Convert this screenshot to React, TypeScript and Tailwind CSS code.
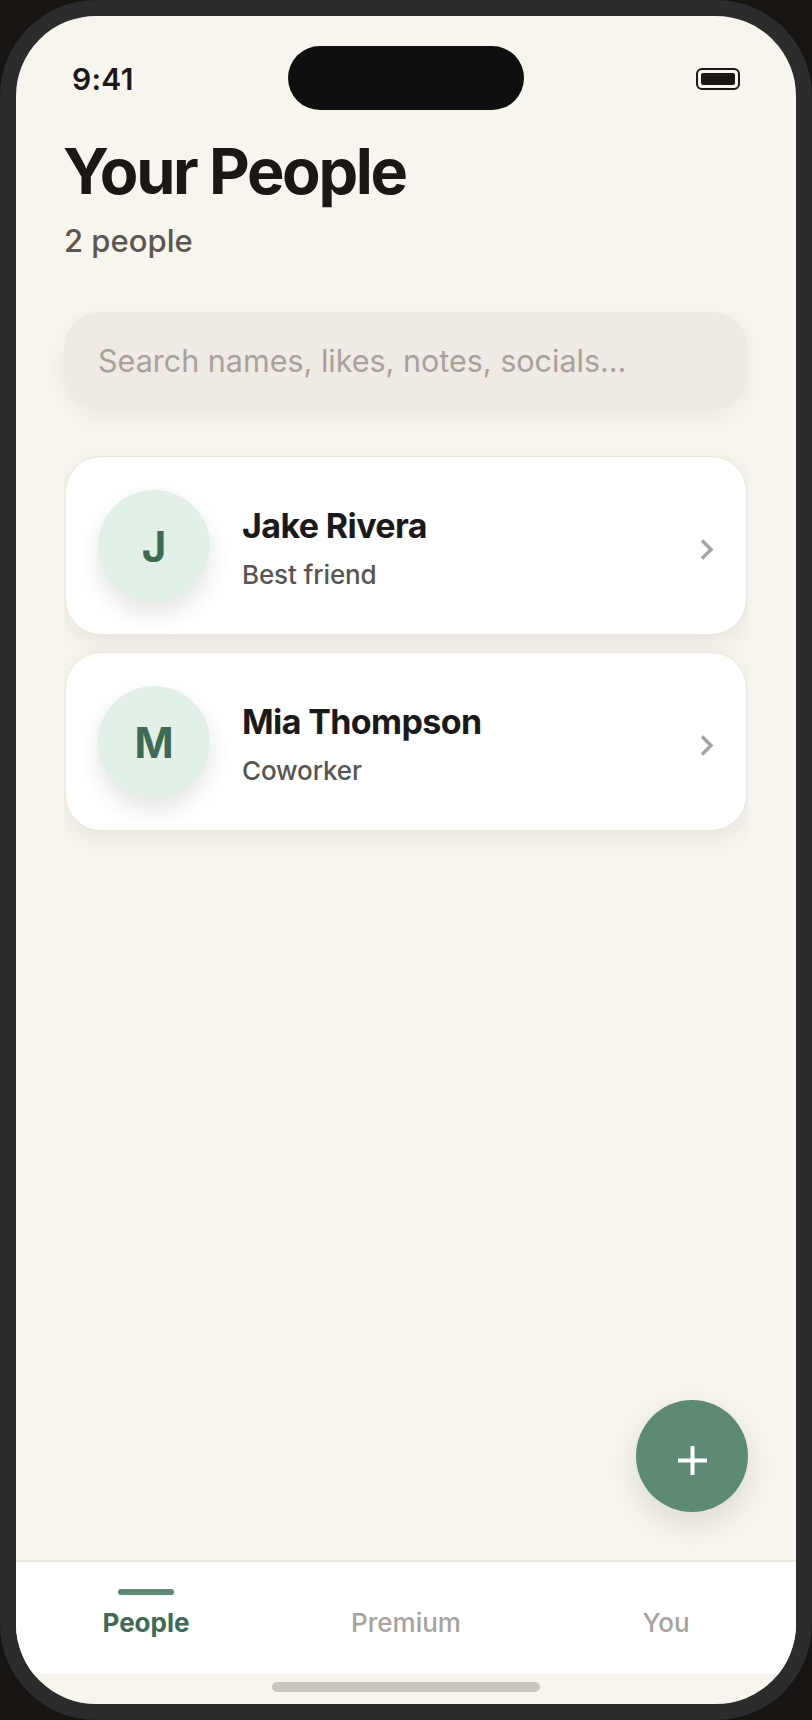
const people = [
  { initial: 'J', name: 'Jake Rivera', relation: 'Best friend' },
  { initial: 'M', name: 'Mia Thompson', relation: 'Coworker' },
];

const tabs = ['People', 'Premium', 'You'];

function PersonCard({ initial, name, relation }: { initial: string; name: string; relation: string }) {
  return (
    <div className="flex h-[179px] items-center rounded-[36px] border border-[#ece8e0] bg-white pt-[1px] pr-[32px] pl-[32px] shadow-[0_8px_24px_rgba(60,50,30,0.08)]">
      <div className="flex h-[112px] w-[112px] shrink-0 items-center justify-center rounded-full bg-[#e3f0e8] text-[42px] font-bold text-[#3d6b55] shadow-[0_12px_24px_rgba(60,50,30,0.12)]">
        {initial}
      </div>
      <div className="mt-[5px] ml-[32px] flex-1">
        <div className="text-[34px] leading-[42px] font-bold tracking-[-0.018em] text-[#1a1a1a]">{name}</div>
        <div className="mt-[11px] text-[26px] leading-[34px] font-medium tracking-[-0.005em] text-[#555555]">{relation}</div>
      </div>
      <svg className="mt-[6px]" width="14" height="21" viewBox="0 0 14 21" fill="none" stroke="#a8a29e" strokeWidth="3.5">
        <path d="M2 1.5l9 9-9 9" />
      </svg>
    </div>
  );
}

export default function App() {
  return (
    <div className="h-[1720px] w-[812px] bg-[#171412] font-['Inter',sans-serif]">
      <div className="h-full w-full rounded-[96px] border-16 border-[#2c2c2e] bg-[#f8f5ef]">
        <div className="relative flex h-full flex-col overflow-hidden rounded-[80px]">
          {/* status bar */}
          <div className="flex h-[94px] shrink-0 items-end justify-between pr-[56px] pl-[56px] pb-[14px]">
            <span className="text-[30px] leading-[34px] font-semibold tracking-[0.01em] text-[#1a1714]">9:41</span>
            <div className="mb-[6px] flex h-[22px] w-[44px] items-center rounded-[6px] border-2 border-[#1a1714] p-[3px]">
              <div className="h-full w-full rounded-[2px] bg-[#1a1714]" />
            </div>
          </div>
          <div className="absolute top-[30px] left-[272px] h-[64px] w-[236px] rounded-[32px] bg-[#0f0f0f]" />

          {/* header */}
          <div className="mt-[25px] px-[48px]">
            <h1 className="-ml-[1px] text-[63px] leading-[72px] font-bold tracking-[-0.037em] text-[#1a1714]">Your People</h1>
            <p className="mt-[14px] text-[31px] leading-[40px] font-medium text-[#5c5650]">2 people</p>
          </div>

          {/* search */}
          <div className="mx-[48px] mt-[51px] flex h-[98px] shrink-0 items-center rounded-[36px] bg-[#f0eae4] px-[34px] shadow-[0_8px_24px_rgba(60,50,30,0.06)]">
            <span className="text-[30.5px] text-[#a8a29e]">Search names, likes, notes, socials...</span>
          </div>

          {/* people, the list clips the card shadows at its sides */}
          <div className="mx-[48px] mt-[22px] flex min-h-0 flex-1 flex-col gap-[17px] overflow-hidden px-[1px] pt-[24px]">
            {people.map(p => (
              <PersonCard key={p.name} {...p} />
            ))}
          </div>

          {/* add button */}
          <div className="absolute right-[48px] bottom-[192px] flex h-[112px] w-[112px] items-center justify-center rounded-full bg-[#5c8a72] shadow-[0_12px_32px_rgba(60,50,30,0.14)]">
            <svg className="mt-[8px]" width="29" height="29" viewBox="0 0 29 29" fill="none" stroke="#ffffff" strokeWidth="4">
              <path d="M14.5 0v29M0 14.5h29" />
            </svg>
          </div>

          {/* tab bar */}
          <div className="grid h-[114px] shrink-0 grid-cols-3 border-t-2 border-[#ebe8dc] bg-white">
            {tabs.map((tab, i) => (
              <div key={tab} className="relative flex items-start justify-center pt-[44px]">
                {i === 0 && <div className="absolute top-[27px] h-[6px] w-[56px] rounded-full bg-[#5c8a72]" />}
                <span className={i === 0 ? 'text-[26px] leading-[34px] font-bold text-[#3d6b55]' : 'text-[26px] leading-[34px] font-medium text-[#a8a29e]'}>
                  {tab}
                </span>
              </div>
            ))}
          </div>

          {/* home indicator */}
          <div className="flex h-[30px] shrink-0 justify-center pt-[8px]">
            <div className="h-[10px] w-[268px] rounded-full bg-[#c9c5bf]" />
          </div>
        </div>
      </div>
    </div>
  );
}
